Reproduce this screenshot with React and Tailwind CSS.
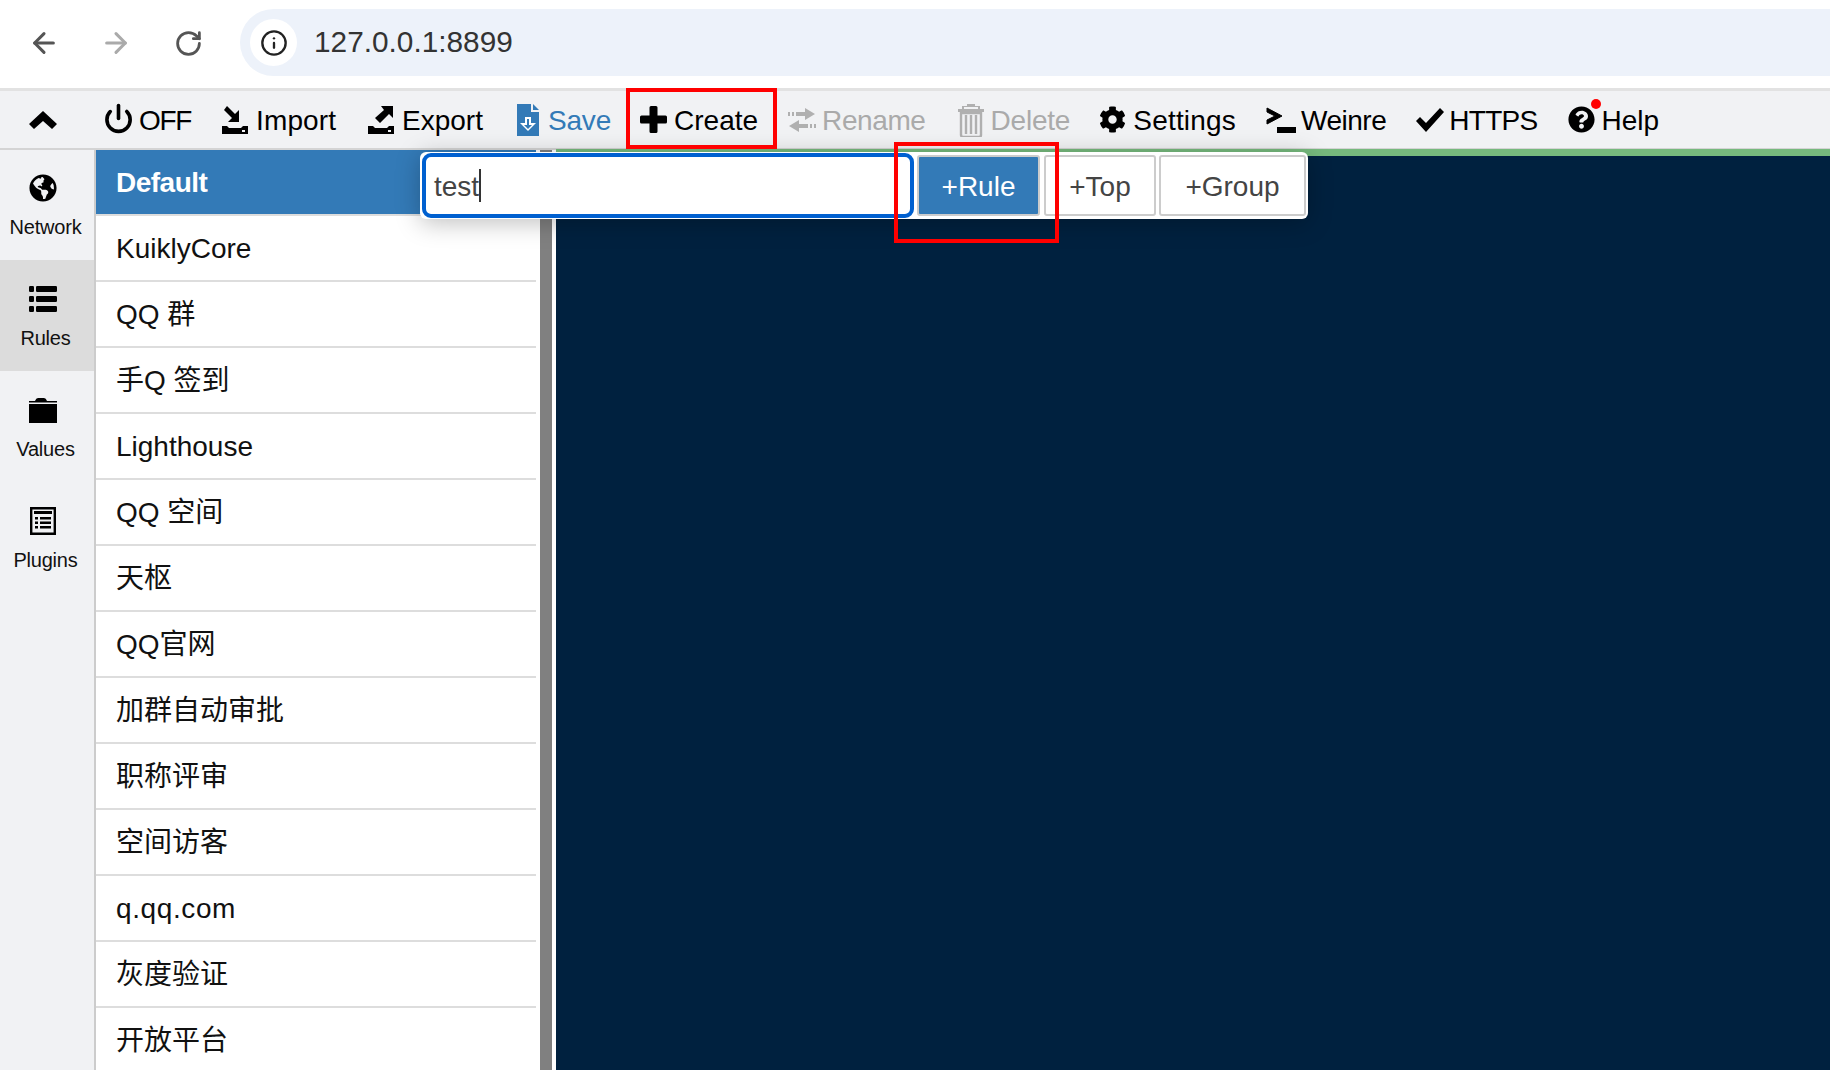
import React from "react";
import { FaGlobeAmericas, FaCog, FaQuestionCircle } from "react-icons/fa";
import { ArrowLeft, ArrowRight, RotateCw, Info, Power } from "lucide-react";

const font = "font-['Liberation_Sans','Noto_Sans_CJK_SC',sans-serif]";

const ChevronIcon = () => (
  <svg width="28" height="18" viewBox="0 0 28 18" className="shrink-0">
    <path d="M14 0l14 13-5 5-9-8-9 8-5-5z" fill="#000" />
  </svg>
);
const PlusIcon = () => (
  <svg width="27" height="27" viewBox="0 0 27 27" className="shrink-0">
    <path d="M9.500 1.500q0-1.500 1.500-1.500h5q1.500 0 1.500 1.500v8h8q1.500 0 1.500 1.500v5q0 1.500-1.500 1.500h-8v8q0 1.500-1.500 1.500h-5q-1.500 0-1.500-1.500v-8h-8q-1.500 0-1.500-1.500v-5q0-1.500 1.500-1.500h8z" fill="#000" />
  </svg>
);
const CheckIcon = () => (
  <svg width="28" height="24" viewBox="0 0 28 24" className="shrink-0">
    <path d="M0 13l4-4 6 6L24 0l4 4-18 20z" fill="#000" />
  </svg>
);
const ImportIcon = () => (
  <svg width="26" height="28" viewBox="0 0 26 28" className="shrink-0">
    <path d="M5 0l8 8 4-4v12H6l4-4-8-8z" fill="#000" />
    <path d="M0 20h5l2 2h12l2-2h5v8H0z" fill="#000" />
    <rect x="20" y="24" width="3" height="2" fill="#f1f2f4" />
  </svg>
);
const ExportIcon = () => (
  <svg width="26" height="28" viewBox="0 0 26 28" className="shrink-0">
    <path d="M13 0h12v12l-4-4-9 9-5-5 9-8z" fill="#000" />
    <path d="M0 20h5l2 2h12l2-2h5v8H0z" fill="#000" />
    <rect x="20" y="24" width="3" height="2" fill="#f1f2f4" />
  </svg>
);
const SaveIcon = () => (
  <svg width="22" height="32" viewBox="0 0 22 32" className="shrink-0">
    <path d="M0 0h14v8h8v24H0z" fill="#337ab7" />
    <path d="M16 0l6 6h-6z" fill="#337ab7" />
    <path d="M8 13h6v6h5l-8 8-8-8h5z" fill="#fff" />
    <path d="M10 15h2v6h3l-4 4-4-4h3z" fill="#337ab7" />
  </svg>
);
const RenameIcon = () => (
  <svg width="28" height="24" viewBox="0 0 28 24" className="shrink-0">
    <path d="M17 0l10 6-10 6V8H8V4h9zM0 4h2v4H0zM4 4h2v4H4z" fill="#b0b0b0" />
    <path d="M11 12L1 18l10 6v-4h9v-4h-9zM22 16h2v4h-2zM26 16h2v4h-2z" fill="#b0b0b0" />
  </svg>
);
const TrashIcon = () => (
  <svg width="26" height="34" viewBox="0 0 26 34" className="shrink-0">
    <path d="M0 6h26v3H0zM9 1h8v2h5v3h-2V4H6v2H4V3h5z" fill="#b0b0b0" />
    <path d="M3 10h20v22a2 2 0 0 1-2 2H5a2 2 0 0 1-2-2z" fill="none" stroke="#b0b0b0" strokeWidth="2.400" />
    <path d="M8 12v19M13 12v19M18 12v19" stroke="#b0b0b0" strokeWidth="2.400" />
  </svg>
);
const TermIcon = () => (
  <svg width="30" height="28" viewBox="0 0 30 28" className="shrink-0">
    <path d="M1 2l15 8-15 8v-4l8-4-8-4z" fill="#000" stroke="#000" strokeWidth="1" />
    <rect x="11" y="21" width="19" height="6" fill="#000" />
  </svg>
);
const ListIcon = () => (
  <svg width="28" height="26" viewBox="0 0 28 26">
    <rect x="0" y="0" width="5" height="6" rx="1.200" fill="#000" />
    <rect x="0" y="10" width="5" height="6" rx="1.200" fill="#000" />
    <rect x="0" y="20" width="5" height="6" rx="1.200" fill="#000" />
    <rect x="7" y="0" width="21" height="6" rx="1.200" fill="#000" />
    <rect x="7" y="10" width="21" height="6" rx="1.200" fill="#000" />
    <rect x="7" y="20" width="21" height="6" rx="1.200" fill="#000" />
  </svg>
);
const FolderIcon = () => (
  <svg width="28" height="26" viewBox="0 0 28 26">
    <path d="M0 4h6q1-3 3-3h6q2 0 3 3h10v1.500H0z" fill="#000" />
    <rect x="0" y="7" width="28" height="19" fill="#000" />
  </svg>
);
const PluginsIcon = () => (
  <svg width="26" height="28" viewBox="0 0 26 28">
    <path d="M1.200 1.200h23.600v25.600H1.200z" fill="none" stroke="#000" strokeWidth="2.400" />
    <path d="M4 4h18v3H4z" fill="#000" />
    <path d="M5 10h3v2.400H5zM10 10h11v2.400H10zM5 14.500h3v2.400H5zM10 14.500h11v2.400H10zM5 19h3v2.400H5zM10 19h11v2.400H10z" fill="#000" />
  </svg>
);

const rows = ["KuiklyCore", "QQ 群", "手Q 签到", "Lighthouse", "QQ 空间", "天枢", "QQ官网", "加群自动审批", "职称评审", "空间访客", "q.qq.com", "灰度验证", "开放平台"];

function SideItem({ icon, label, active, first }) {
  return (
    <div className={`flex flex-col items-center pr-[3px] ${first ? "h-[110px] pt-[24px]" : "h-[111px] pt-[25px]"} ${active ? "bg-[#dcdcdc]" : ""}`}>
      <div className="h-[28px] mr-[6px] flex items-center justify-center">{icon}</div>
      <div className="mt-[13px] text-[20px] leading-[24px] tracking-[-0.2px] text-[#111]">{label}</div>
    </div>
  );
}

export default function App() {
  return (
    <div className={`${font} relative w-[1830px] h-[1070px] overflow-hidden bg-white flex flex-col`}>
      {/* browser chrome */}
      <div className="h-[91px] shrink-0 flex items-start border-b-[3px] border-[#e2e2e2] rounded-tl-[14px] bg-white">
        <div className="flex items-center h-[86px] pl-[28px]">
          <ArrowLeft size={32} strokeWidth={2.300} className="text-[#555]" />
          <ArrowRight size={32} strokeWidth={2.300} className="text-[#aaa] ml-[40px]" />
          <RotateCw size={29} strokeWidth={2.300} className="text-[#555] ml-[42px]" />
        </div>
        <div className="ml-[37px] mt-[9px] flex-1 h-[67px] rounded-l-[34px] bg-[#edf2fa] flex items-center pl-[10px]">
          <div className="w-[47px] h-[47px] rounded-full bg-white flex items-center justify-center">
            <Info size={28} strokeWidth={2} className="text-[#222]" />
          </div>
          <span className="ml-[17px] text-[29.800px] text-[#333]">127.0.0.1:8899</span>
        </div>
      </div>

      {/* toolbar */}
      <div className="h-[59px] shrink-0 flex items-center bg-[#f1f2f4] border-b-[2px] border-[#d4d4d4] text-[28px] leading-[34px] text-black">
        <div className="ml-[29px]"><ChevronIcon /></div>
        <div className="ml-[46px] flex items-center gap-[5px]"><Power size={31} strokeWidth={2.800} className="-mt-[3px]" /><span className="tracking-[-1.300px] pt-[2px]">OFF</span></div>
        <div className="ml-[31px] flex items-center gap-[8px]"><ImportIcon /><span className="tracking-[0.100px] pt-[2px]">Import</span></div>
        <div className="ml-[32px] flex items-center gap-[8px]"><ExportIcon /><span className="pt-[2px]">Export</span></div>
        <div className="ml-[34px] flex items-center gap-[9px] text-[#337ab7]"><SaveIcon /><span className="tracking-[-0.2px] pt-[2px]">Save</span></div>
        <div className="ml-[29px] flex items-center gap-[7px]"><PlusIcon /><span className="pt-[2px]">Create</span></div>
        <div className="ml-[30px] flex items-center gap-[6px] text-[#aaa]"><RenameIcon /><span className="tracking-[-0.400px] pt-[2px]">Rename</span></div>
        <div className="ml-[32px] flex items-center gap-[7px] text-[#aaa]"><TrashIcon /><span className="tracking-[-0.200px] pt-[2px]">Delete</span></div>
        <div className="ml-[29px] flex items-center gap-[7px]"><FaCog size={27} /><span className="tracking-[0.200px] pt-[2px]">Settings</span></div>
        <div className="ml-[30px] flex items-center gap-[5px]"><TermIcon /><span className="tracking-[-0.500px] pt-[2px]">Weinre</span></div>
        <div className="ml-[30px] flex items-center gap-[5px]"><CheckIcon /><span className="tracking-[-0.700px] pt-[2px]">HTTPS</span></div>
        <div className="ml-[30px] flex items-center gap-[7px] relative">
          <FaQuestionCircle size={27} />
          <span className="pt-[2px]">Help</span>
          <span className="absolute left-[23px] -top-[3px] w-[10px] h-[10px] rounded-full bg-[#ff0000]" />
        </div>
      </div>

      {/* body */}
      <div className="flex-1 min-h-0 flex">
        <div className="w-[96px] shrink-0 bg-[#f1f2f4] border-r-[2px] border-[#ccc]">
          <SideItem first label="Network" icon={<FaGlobeAmericas size={28} />} />
          <SideItem active label="Rules" icon={<ListIcon />} />
          <SideItem label="Values" icon={<FolderIcon />} />
          <SideItem label="Plugins" icon={<PluginsIcon />} />
        </div>
        <div className="w-[440px] shrink-0 text-[28px] text-[#111]">
          <div className="h-[64px] flex items-center pl-[20px] pt-[2px] bg-[#337ab7] text-white font-bold tracking-[-0.500px]">Default</div>
          <div className="border-t-[2px] border-[#ddd]">
            {rows.map((r) => (
              <div key={r} className={`h-[66px] flex items-center pl-[20px] pt-[2px] border-b-[2px] border-[#ddd] ${r === "q.qq.com" ? "tracking-[0.600px]" : ""}`}>{r}</div>
            ))}
          </div>
        </div>
        <div className="w-[20px] shrink-0 px-[4px] bg-white">
          <div className="h-full bg-[#808080]" />
        </div>
        <div className="flex-1 min-w-0 flex flex-col -mt-[1px]">
          <div className="h-[7px] bg-[#76b97d]" />
          <div className="flex-1 bg-[#00213f]" />
        </div>
      </div>

      {/* create popup */}
      <div className="absolute left-[420px] top-[152px] w-[888px] h-[67px] bg-white rounded-[6px] shadow-[0_4px_24px_rgba(0,0,0,0.25)] flex items-stretch text-[28px]">
        <div className="ml-[2px] my-[1px] w-[492px] border-[4px] border-[#0060d0] rounded-[9px] flex items-center pl-[8px] text-[#444]">
          <span className="pt-[2px]">test</span><span className="w-[2px] h-[33px] bg-[#333]" />
        </div>
        <div className="ml-[3px] my-[3px] w-[123px] pt-[2px] flex items-center justify-center bg-[#337ab7] text-white border-[2px] border-[#ccc] rounded-[3px]">+Rule</div>
        <div className="ml-[4px] my-[3px] w-[112px] pt-[2px] flex items-center justify-center bg-white text-[#444] border-[2px] border-[#ccc] rounded-[3px]">+Top</div>
        <div className="ml-[3px] my-[3px] w-[147px] pt-[2px] flex items-center justify-center bg-white text-[#444] border-[2px] border-[#ccc] rounded-[3px]">+Group</div>
      </div>

      {/* annotation boxes */}
      <div className="absolute left-[626px] top-[88px] w-[151px] h-[61px] border-[4px] border-[#ff0000]" />
      <div className="absolute left-[894px] top-[142px] w-[165px] h-[101px] border-[4px] border-[#ff0000]" />
    </div>
  );
}
